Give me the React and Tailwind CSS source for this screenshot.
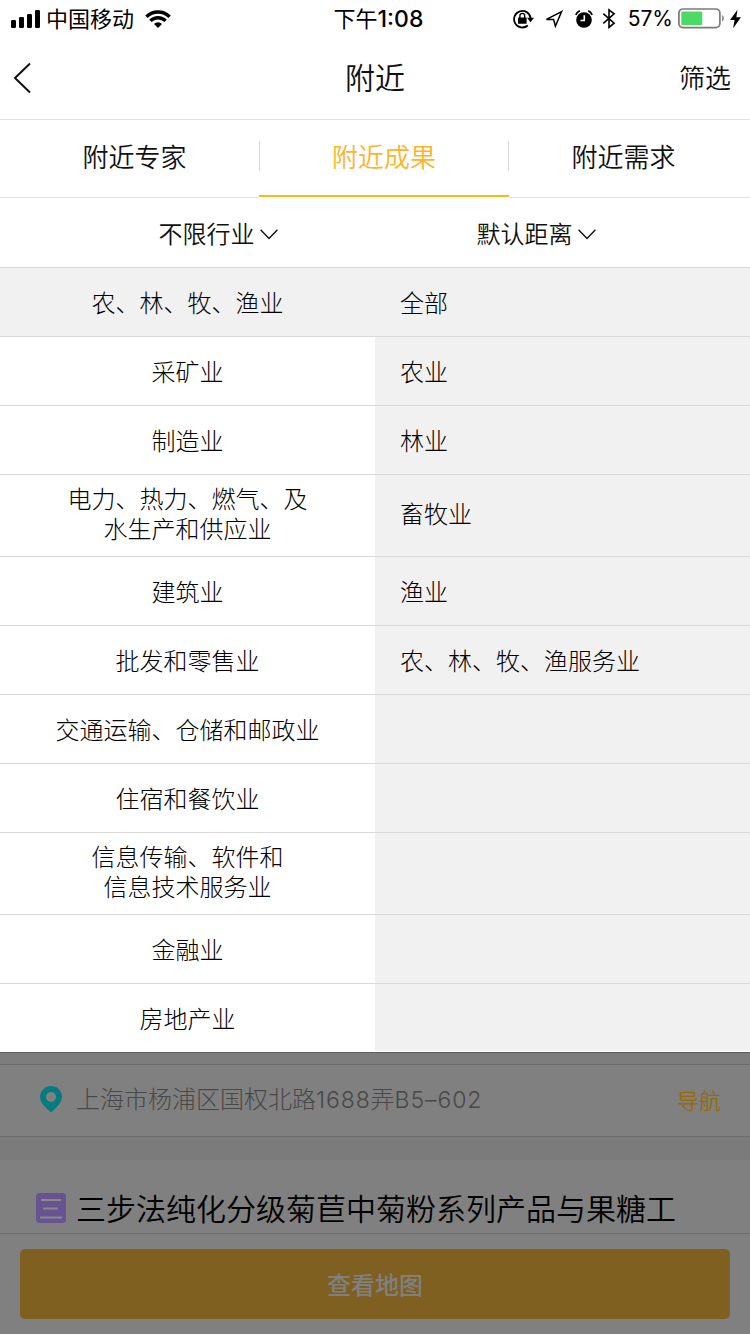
import { useState } from "react";

const tabs = ["附近专家", "附近成果", "附近需求"];

const industries = [
  "农、林、牧、渔业",
  "采矿业",
  "制造业",
  "电力、热力、燃气、及\n水生产和供应业",
  "建筑业",
  "批发和零售业",
  "交通运输、仓储和邮政业",
  "住宿和餐饮业",
  "信息传输、软件和\n信息技术服务业",
  "金融业",
  "房地产业",
];

const subIndustries = ["全部", "农业", "林业", "畜牧业", "渔业", "农、林、牧、渔服务业"];

// two-line rows are taller, and the last row drops its divider
function rowClass(name, isLast) {
  if (isLast) return "h-[68px] border-b border-white";
  return name.includes("\n") ? "h-[82px] border-b border-[#d9d9d9]" : "h-[69px] border-b border-[#d9d9d9]";
}

function StatusBar() {
  return (
    <div className="flex h-10 items-center justify-between pl-[11px] pr-[9px] pb-[3px] text-black">
      <div className="flex w-[300px] items-center">
        <svg width="29" height="18" viewBox="0 0 29 18" className="shrink-0">
          <rect x="0" y="10" width="5" height="8" rx="1.2" />
          <rect x="8" y="7" width="5" height="11" rx="1.2" />
          <rect x="16" y="4" width="5" height="14" rx="1.2" />
          <rect x="24" y="0" width="5" height="18" rx="1.2" />
        </svg>
        <span className="ml-1.5 pb-[3px] text-[22px] leading-none">中国移动</span>
        <svg width="26" height="18" viewBox="0 0 26 18" className="ml-[11px] shrink-0" fill="none" stroke="#000" strokeWidth="3.4">
          <path d="M1.4 6.7a16.6 16.6 0 0 1 23.2 0" />
          <path d="M5.4 10.9a10.9 10.9 0 0 1 15.2 0" />
          <path d="M13 18l-4-4a5.7 5.7 0 0 1 8 0z" fill="#000" stroke="none" />
        </svg>
      </div>
      <span className="whitespace-nowrap pb-px pl-[5px] text-[22px] leading-none">
        下午<span className="font-[Inter] text-[23px] font-medium">1:08</span>
      </span>
      <div className="flex w-[300px] items-center justify-end">
        <svg width="21" height="20" viewBox="0 0 21 20" className="shrink-0" fill="none" stroke="#000" strokeWidth="1.8">
          <path d="M14.8 16.5A8.3 8.3 0 1 1 17.6 9" />
          <path d="M14 8.7h7l-3.5 4.6z" fill="#000" stroke="none" />
          <rect x="5" y="8.6" width="8.6" height="6.2" rx=".6" fill="#000" stroke="none" />
          <path d="M6.9 9V6.8a2.4 2.4 0 0 1 4.8 0V9" strokeWidth="1.4" />
        </svg>
        <svg width="20" height="18" viewBox="0 0 20 18" className="ml-[10px] shrink-0" fill="none" stroke="#000" strokeWidth="1.5">
          <path d="M2.5 9.4L17.6 1.6 11.4 16.2 9.6 9.4z" />
        </svg>
        <svg width="18" height="18" viewBox="0 0 18 18" className="ml-[11px] shrink-0">
          <circle cx="9" cy="10" r="7.8" />
          <path d="M.8 4.8A8 8 0 0 1 4.8.8M17.2 4.8a8 8 0 0 0-4-4" fill="none" stroke="#000" strokeWidth="1.8" />
          <path d="M9.3 5.3v5.2H5.4" fill="none" stroke="#fff" strokeWidth="1.6" />
        </svg>
        <svg width="14" height="21" viewBox="0 0 14 21" className="ml-[9px] shrink-0" fill="none" stroke="#000" strokeWidth="1.6">
          <path d="M1.3 5.6l10.800 9.600L7 19.400V1.800l5.100 4.100L1.300 15.400" />
        </svg>
        <span className="ml-3 font-[Inter] text-[21px] leading-none">57%</span>
        <svg width="47" height="21" viewBox="0 0 47 21" className="ml-[5px] shrink-0">
          <rect x=".9" y="1" width="41" height="18.6" rx="4" fill="none" stroke="#7a7a7a" strokeWidth="1.7" />
          <rect x="3.3" y="3.5" width="21" height="13.4" rx="1" fill="#4cd964" />
          <path d="M44.2 6.8a4.6 4.6 0 0 1 0 7z" fill="#7a7a7a" />
        </svg>
        <svg width="11" height="20" viewBox="0 0 12 20" className="ml-[5px] shrink-0">
          <path d="M8.2 0L0 11.2h5L3.4 20 12 8.2H6.9z" />
        </svg>
      </div>
    </div>
  );
}

function FilterButton({ label }) {
  return (
    <button className="flex w-[318px] items-center justify-center gap-[5px] pr-0.5">
      <span>{label}</span>
      <svg width="18" height="11" viewBox="0 0 18 11" className="mt-[3px]" fill="none" stroke="#111" strokeWidth="1.4">
        <path d="M.6 .8L9 9.4 17.4 .8" />
      </svg>
    </button>
  );
}

export default function App() {
  const [activeTab, setActiveTab] = useState(1);
  const [selected, setSelected] = useState(0);

  return (
    <div className="flex h-[1334px] w-[750px] flex-col overflow-hidden bg-white font-['Noto_Sans_CJK_SC',sans-serif] text-[#111]">
      <StatusBar />

      <header className="flex h-20 items-center justify-between border-b border-[#e0e0e0] pl-[13px] pr-[19px] pb-1">
        <div className="w-[106px]">
          <svg width="19" height="32" viewBox="0 0 19 32" fill="none" stroke="#111" strokeWidth="2">
            <path d="M17 1.5L2 16l15 14.5" />
          </svg>
        </div>
        <h1 className="pb-[3px] text-[30px] font-[350] leading-none">附近</h1>
        <button className="w-[100px] pb-px text-right text-[26px] font-[350] leading-none">筛选</button>
      </header>

      <nav className="flex h-[78px] shrink-0">
        {tabs.map((tab, i) => (
          <button
            key={tab}
            onClick={() => setActiveTab(i)}
            className={`relative flex items-center justify-center text-[26px] font-[350] ${
              i === 0 ? "w-[259px] pl-[10px]" : i === 1 ? "w-[250px]" : "w-[241px] pr-[12px]"
            } ${
              activeTab === i
                ? "mb-px border-b-2 border-[#fdb813] pb-[4px] text-[#fdb42a]"
                : "border-b border-[#dedede] pb-[6px]"
            }`}
          >
            {tab}
            {i > 0 && (
              <span
                className={`absolute top-[21px] h-[30px] w-px bg-[#d9d9d9] ${i === 1 ? "left-0" : "-left-px"}`}
              />
            )}
          </button>
        ))}
      </nav>

      <div className="flex h-[70px] shrink-0 items-center border-b border-[#d9d9d9] pl-[60px] text-[24px] font-[350]">
        <FilterButton label="不限行业" />
        <FilterButton label="默认距离" />
      </div>

      {/* Two-column picker: left is the industry, right its sub-industries */}
      <div className="flex shrink-0 flex-col text-[24px] font-light leading-[30px] text-black">
        {industries.map((name, i) => (
          <div
            key={name}
            onClick={() => setSelected(i)}
            className={`flex ${rowClass(name, i === industries.length - 1)}`}
          >
            <div
              className={`flex w-[375px] items-center justify-center whitespace-pre-line text-center ${
                name.includes("\n") ? "pb-[6px]" : ""
              } ${selected === i ? "bg-[#f1f1f1]" : "bg-white"}`}
            >
              {name}
            </div>
            <div
              className={`flex flex-1 items-center bg-[#f1f1f1] pl-[25px] ${
                name.includes("\n") ? "pb-[6px]" : ""
              }`}
            >
              {subIndustries[i]}
            </div>
          </div>
        ))}
      </div>

      {/* Page content behind the dimmed backdrop */}
      <main className="flex flex-1 flex-col bg-[#808080]">
        <div className="h-[13px] border-b border-t border-t-[#5e5e5e] border-b-[#6c6c6c] bg-[#7d7d7d]" />
        <div className="flex h-[72px] items-center border-b border-[#6c6c6c] pb-[3px] pl-10 pr-[29px]">
          <svg width="22" height="27" viewBox="0 0 22 27" className="shrink-0">
            <path
              fillRule="evenodd"
              fill="#077b80"
              d="M11 0a11 11 0 0 1 11 11c0 5.8-5.4 10.2-11 15.600C5.400 21.200 0 16.800 0 11A11 11 0 0 1 11 0zm0 6a5 5 0 1 0 0 10 5 5 0 0 0 0-10z"
            />
          </svg>
          <span className="ml-[14px] flex-1 text-[24px] font-light text-[#484848]">
            上海市杨浦区国权北路
            <span className="font-[Inter] text-[23px] tracking-[0.9px]">1688</span>弄
            <span className="font-[Inter] text-[23px] tracking-[0.9px]">B5–602</span>
          </span>
          <button className="text-[22px] font-[350] text-[#966a0e]">导航</button>
        </div>
        <div className="h-[23px] bg-[#7b7b7b]" />
        <div className="flex h-[73px] items-center pl-9 pt-[22px]">
          <svg width="30" height="30" viewBox="0 0 30 30" className="shrink-0">
            <rect width="30" height="30" rx="4" fill="#675390" />
            <path d="M5 7h20M7 15.5h15M4 24.5h22" stroke="#8a8a8e" strokeWidth="2" />
          </svg>
          <h2 className="ml-[10px] pb-[2px] text-[30px] font-[350] leading-none text-black">
            三步法纯化分级菊苣中菊粉系列产品与果糖工
          </h2>
        </div>
        <footer className="flex-1 border-t border-[#6c6c6c] px-5 pt-[15px]">
          <button className="flex h-[70px] w-full items-center justify-center rounded-[5px] bg-[#7f6021] text-[24px] font-medium text-[#808080]">
            查看地图
          </button>
        </footer>
      </main>
    </div>
  );
}
